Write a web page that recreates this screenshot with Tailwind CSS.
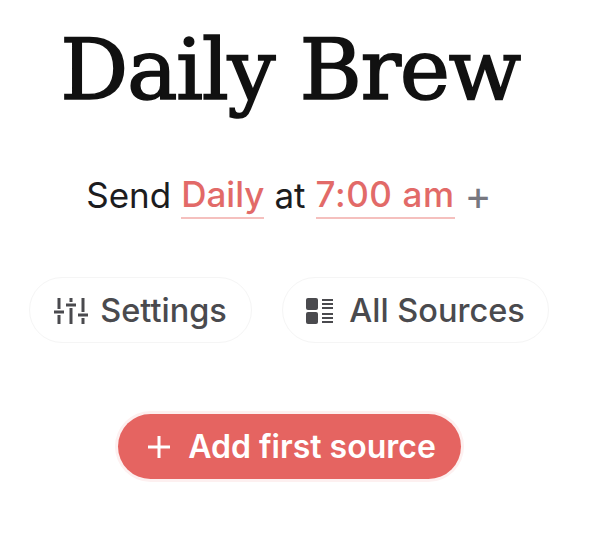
<!DOCTYPE html>
<html lang="en">
<head>
  <meta charset="utf-8">
  <title>Daily Brew</title>
  <script src="https://cdn.jsdelivr.net/npm/@tailwindcss/browser@4"></script>
</head>
<body class="bg-white font-['Inter',sans-serif]">
  <div class="flex flex-col items-center w-[578px] h-[538px] overflow-hidden">
    <!-- Title -->
    <h1 class="ml-[2px] mt-[24px] h-[92px] leading-[92px] text-[85px] text-[#111111] font-['DejaVu_Serif',serif] tracking-[-1.5px] [-webkit-text-stroke:1.6px_#111111] whitespace-nowrap">Daily Brew</h1>

    <!-- Schedule -->
    <div class="mt-[54px] flex items-center h-[50px] text-[35px] text-[#1c1c1e] whitespace-nowrap">
      <span>Send</span>
      <span class="ml-[10px] text-[#e26a68] font-medium border-b-2 border-[#f5c0be] leading-[46px]">Daily</span>
      <span class="ml-[10px]">at</span>
      <span class="ml-[10px] text-[#e26a68] font-medium border-b-2 border-[#f5c0be] leading-[46px] tracking-[0.6px]">7:00 am</span>
      <span class="ml-[10px] text-[41px] leading-none text-[#77777f]">+</span>
    </div>

    <!-- Pills -->
    <div class="mt-[57px] flex gap-[30px] text-[32.5px] font-medium text-[#4a4a4e] whitespace-nowrap">
      <button class="w-[223px] h-[66px] pt-[2px] rounded-full border border-[#f5f5f5] flex items-center justify-center gap-[12px]">
        <svg width="34" height="28" viewBox="0 0 34 28" fill="none" stroke="#4a4a4e" stroke-width="3">
          <path d="M5 1v11M5 18v9M17 1v4M17 11v16M29 1v14M29 21v6M0 15h10M12 8h10M24 18h10"/>
        </svg>
        Settings
      </button>
      <button class="w-[267px] h-[66px] pt-[2px] rounded-full border border-[#f5f5f5] flex items-center justify-center gap-[15px]">
        <svg width="28" height="26" viewBox="0 0 28 26" fill="#4a4a4e">
          <rect x="0" y="0" width="12" height="12" rx="2"/>
          <rect x="0" y="14" width="12" height="12" rx="2"/>
          <path d="M16 1h11v2H16zM16 5h11v2H16zM16 9h11v2H16zM16 15h11v2H16zM16 19h11v2H16zM16 23h11v2H16z"/>
        </svg>
        All Sources
      </button>
    </div>

    <!-- Add source -->
    <button class="mt-[71px] w-[343px] h-[65px] pl-[5px] rounded-full bg-[#e56461] shadow-[0_0_0_3px_#fdf0f0] flex items-center justify-center gap-[17px] text-[32px] font-semibold text-white whitespace-nowrap">
      <svg width="24" height="24" viewBox="0 0 24 24" fill="none" stroke="white" stroke-width="3">
        <path d="M12 1v22M1 12h22"/>
      </svg>
      Add first source
    </button>
  </div>
</body>
</html>
